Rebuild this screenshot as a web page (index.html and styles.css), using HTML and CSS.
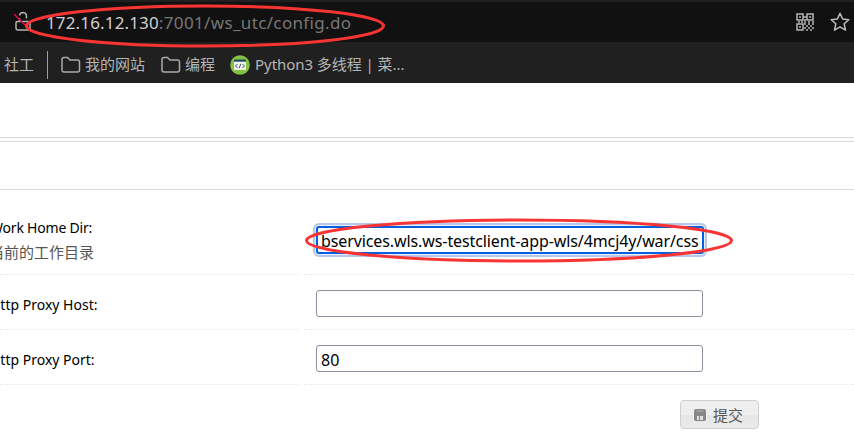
FILE: index.html
```html
<!DOCTYPE html>
<html lang="zh-CN">
<head>
<meta charset="utf-8">
<title>config.do</title>
<link rel="stylesheet" href="styles.css">
</head>
<body>
<header class="browser">
  <div class="address">
    <svg class="lock" width="20" height="24" viewBox="0 0 20 24"><path d="M5.500 11.500h11q1.500 0 1.500 1.500v5q0 2-2 2H6q-2 0-2-2v-5q0-1.500 1.500-1.500zM7.500 11V8M7.500 5.500Q8 2.500 11 2.500q3.500.200 3.500 4v2" fill="none" stroke="#b2b2b2" stroke-width="1.500"/><path d="M2 4l12.500 12.500" stroke="#d60b48" stroke-width="1.500"/></svg>
    <div class="url"><span class="host">172.16.12.130</span><span class="path">:7001/ws_utc/config.do</span></div>
    <svg class="qr" width="18" height="18" viewBox="0 0 18 18" fill="none" stroke="#b5b5b5" stroke-width="1.500"><path d="M1 1h6v6H1zM11 1h6v6h-6zM1 11h6v6H1zM3 4h2M13 4h2M3 14h2"/><path d="M7 4h4M2 9h2m1 0h2m1 0h2m2 0h2m2 0h2M8 7h2M8 11h2m2 0h2m2 0h2M10 13h2m2 0h2M8 15h2m2 0h2m2 0h2M10 17h2m2 0h2"/></svg>
    <svg class="star" width="20" height="20" viewBox="0 0 20 20"><path d="M10 1.300l2.600 5.700 6.200.7-4.600 4.100 1.300 6.300-5.500-3.200-5.500 3.200 1.300-6.300L1.200 7.700l6.200-.7z" fill="none" stroke="#bcbcbc" stroke-width="1.500" stroke-linejoin="round"/></svg>
  </div>
  <nav class="bookmarks">
    <span class="bm-first">社工</span>
    <i class="divider"></i>
    <svg class="folder" width="20" height="18" viewBox="0 0 20 18"><path d="M1 3.500Q1 1.500 3 1.500h3.500L9 4h7.500q2 0 2 2v8q0 2-2 2H3q-2 0-2-2z" fill="none" stroke="#a9a9a9" stroke-width="1.500"/></svg>
    <span class="bm-sites">我的网站</span>
    <svg class="folder" width="20" height="18" viewBox="0 0 20 18"><path d="M1 3.500Q1 1.500 3 1.500h3.500L9 4h7.500q2 0 2 2v8q0 2-2 2H3q-2 0-2-2z" fill="none" stroke="#a9a9a9" stroke-width="1.500"/></svg>
    <span class="bm-code">编程</span>
    <svg class="site" width="20" height="20" viewBox="0 0 20 20"><circle cx="10" cy="10" r="9.800" fill="#83c341"/><path d="M4 5h12v10H4z" fill="#eef2ec"/><path d="M4 4.500h12v2.200H4z" fill="#24485c"/><path d="M7.500 9L5.500 11l2 2M12.500 9l2 2-2 2M10.800 8.800l-1.600 4.400" fill="none" stroke="#41596a"/></svg>
    <span class="bm-py">Python3 多线程 | 菜...</span>
  </nav>
</header>
<main>
  <div class="band-top"></div>
  <div class="band"></div>
  <form class="form">
    <div class="row row-dir">
      <div class="label"><div class="name dir">Work Home Dir:</div><div class="hint">当前的工作目录</div></div>
      <div class="field"><div class="input focused"><span class="dir-value">bservices.wls.ws-testclient-app-wls/4mcj4y/war/css</span></div></div>
    </div>
    <div class="row">
      <div class="label"><div class="name">Http Proxy Host:</div></div>
      <div class="field"><div class="input"></div></div>
    </div>
    <div class="row">
      <div class="label"><div class="name">Http Proxy Port:</div></div>
      <div class="field"><div class="input"><span>80</span></div></div>
    </div>
    <div class="actions"><button type="button"><svg width="12" height="12" viewBox="0 0 12 12"><rect width="12" height="12" rx="2" fill="#888"/><path d="M2.500 2h7" stroke="#b5b5b5"/><path d="M3 7h2v4H3zM6 7h3v4H6z" fill="#e2e2e2"/></svg><span>提交</span></button></div>
  </form>
</main>
<svg class="marks" width="854" height="438" viewBox="0 0 854 438" fill="none" stroke="#f93533" stroke-width="3"><ellipse cx="205" cy="26" rx="178.500" ry="20"/><ellipse cx="519" cy="240.500" rx="212.500" ry="20.500"/></svg>
</body>
</html>
```
FILE: styles.css
```css
* { box-sizing: border-box; }
body { margin: 0; width: 854px; height: 438px; overflow: hidden; position: relative; background: #fff; font-family: "Noto Sans", "Noto Sans CJK SC", sans-serif; }
.browser { height: 83px; background: #202020; padding-top: 2px; }
.address { height: 40px; background: #111; display: flex; align-items: center; padding: 0 4px 0 12px; }
.lock { margin-right: 14px; }
.url { font-size: 17px; line-height: 24px; white-space: nowrap; flex: 1; padding-top: 2px; }
.host { color: #d0d0d0; letter-spacing: 0.15px; }
.path { color: #777; letter-spacing: 0.35px; }
.qr { margin-right: 16px; }
.address svg, .bookmarks svg { flex: none; }
.bookmarks { height: 41px; display: flex; align-items: center; padding: 4px 0 0 4px; font-size: 15px; line-height: 24px; color: #b5b5b5; white-space: nowrap; }
.bookmarks span { flex: none; margin-top: -2px; }
.bm-first { width: 43px; }
.divider { width: 1px; height: 28px; background: #a0a0a0; margin-right: 13px; }
.folder { margin-right: 4px; }
.bm-sites { width: 76px; }
.bm-code { width: 45px; }
.site { margin-right: 5px; }
.bm-py { letter-spacing: -0.05px; }
.band-top { height: 55px; border-bottom: 1px solid #d8d8d8; margin-bottom: 3px; }
.band { height: 49px; border-top: 1px solid #d8d8d8; border-bottom: 1px solid #d8d8d8; }
.row { display: grid; grid-template-columns: 300px 1fr; column-gap: 4px; height: 55px; }
.row-dir { height: 85px; }
.label, .field { border-bottom: 1px dotted #e8e8e8; }
.label { padding-top: 19px; overflow: hidden; font-size: 14px; line-height: 22px; color: #000; white-space: nowrap; }
.row-dir .label { padding-top: 27px; }
.name { margin-left: -10px; }
.dir { letter-spacing: -0.2px; }
.hint { margin: 2px 0 0 -11px; color: #555; font-size: 15px; }
.field { padding: 15px 0 0 12px; }
.row-dir .field { padding-top: 36px; }
.input { width: 387px; height: 27px; border: 1px solid #8f8f9d; border-radius: 3px; padding: 1px 4px 0; font-size: 16px; line-height: 26px; color: #000; white-space: nowrap; }
.focused { height: 28px; width: 388px; border: 2px solid #0060df; box-shadow: 0 0 0 1px #e9effb, 0 0 0 3px #b4c8ec; padding: 0 3px; }
.dir-value { letter-spacing: -0.1px; }
.actions { padding: 15px 0 0 680px; }
button { width: 79px; height: 29px; display: flex; align-items: center; padding: 0 0 0 13px; gap: 7px; border: 1px solid #cfcfcf; border-radius: 4px; background: linear-gradient(#eee 0 50%, #e6e6e6 50%, #ebebeb); color: #555; font: 15px "Noto Sans CJK SC", sans-serif; }
.marks { position: absolute; left: 0; top: 0; }
```
